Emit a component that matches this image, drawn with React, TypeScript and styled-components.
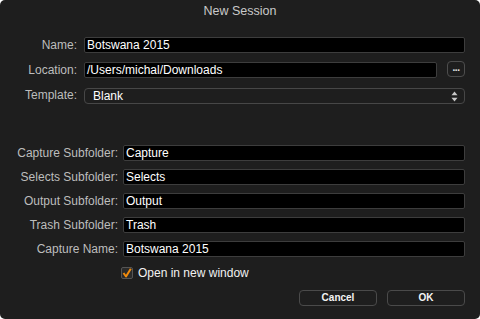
import React from "react";
import styled, { createGlobalStyle } from "styled-components";

const Global = createGlobalStyle`
  html, body { margin: 0; padding: 0; background: #ffffff; }
  body { width: 480px; height: 319px; overflow: hidden; font-family: "Liberation Sans", Arial, sans-serif; }
`;

const Window = styled.div`
  width: 480px;
  height: 319px;
  box-sizing: border-box;
  background: #1e1e1e;
  border-radius: 5px;
  display: flex;
  flex-direction: column;
  overflow: hidden;
`;

const Title = styled.div`
  height: 22px;
  line-height: 22px;
  text-align: center;
  font-size: 12.5px;
  color: #c9c9c9;
`;

const Form = styled.div<{ $label: number; $gap: number; $top: number }>`
  display: grid;
  grid-template-columns: ${(p) => p.$label}px 1fr;
  column-gap: ${(p) => p.$gap}px;
  row-gap: 8px;
  align-items: center;
  margin-top: ${(p) => p.$top}px;
  padding-right: 15px;
`;

const Label = styled.label`
  text-align: right;
  font-size: 12px;
  color: #bdbdbd;
  white-space: nowrap;
`;

const Field = styled.div<{ $mt?: number }>`
  height: 16px;
  box-sizing: border-box;
  background: #000;
  border: 1px solid #3d3d3d;
  border-radius: 2px;
  padding-left: 2px;
  font-size: 12px;
  line-height: 14px;
  color: #ffffff;
  margin-top: ${(p) => p.$mt ?? 0}px;
  white-space: nowrap;
  overflow: hidden;
`;

const FieldWithButton = styled.div`
  display: flex;
  align-items: center;
  gap: 10px;
`;

const Grow = styled(Field)`
  flex: 1;
`;

const DotsButton = styled.div`
  width: 18px;
  height: 16px;
  box-sizing: border-box;
  border: 1px solid #4d4d4d;
  border-radius: 4px;
  margin-top: -1px;
  color: #e8e8e8;
  font-size: 10px;
  font-weight: bold;
  line-height: 12px;
  text-align: center;
  letter-spacing: -0.5px;
`;

const Select = styled.div`
  height: 16px;
  box-sizing: border-box;
  border: 1px solid #474747;
  border-radius: 4px;
  padding: 0 6px 0 8px;
  display: flex;
  align-items: center;
  justify-content: space-between;
  font-size: 12px;
  color: #ffffff;
  margin-top: 2px;
`;

const CheckRow = styled.label`
  display: flex;
  align-items: center;
  gap: 5px;
  margin: 9px 0 0 121px;
  font-size: 12px;
  color: #f2f2f2;
`;

const Box = styled.span`
  width: 12px;
  height: 12px;
  box-sizing: border-box;
  border: 1px solid #555;
  border-radius: 2px;
  background: #2b2b2b;
  display: flex;
  align-items: center;
  justify-content: center;
`;

const Buttons = styled.div`
  display: flex;
  justify-content: flex-end;
  gap: 10px;
  padding-right: 15px;
  margin-top: 10px;
`;

const Button = styled.div`
  width: 78px;
  height: 16px;
  box-sizing: border-box;
  border: 1px solid #4a4a4a;
  border-radius: 4px;
  text-align: center;
  font-size: 10px;
  font-weight: bold;
  line-height: 14px;
  color: #f4f4f4;
`;

const Arrows = () => (
  <svg width="7" height="11" viewBox="0 0 7 11">
    <path d="M3.5 0.5 L6.5 4.3 L0.5 4.3 Z" fill="#c8c8c8" />
    <path d="M3.5 10.5 L6.5 6.7 L0.5 6.7 Z" fill="#c8c8c8" />
  </svg>
);

const Check = () => (
  <svg width="10" height="10" viewBox="0 0 10 10">
    <path d="M1.5 5 L4 8.5 L8.8 0.8" fill="none" stroke="#f28b0c" strokeWidth="2" strokeLinejoin="round" />
  </svg>
);

export default function App() {
  return (
    <>
      <Global />
      <Window>
        <Title>New Session</Title>
        <Form $label={77} $gap={7} $top={15}>
          <Label>Name:</Label>
          <Field>Botswana 2015</Field>
          <Label>Location:</Label>
          <FieldWithButton>
            <Grow $mt={1}>/Users/michal/Downloads</Grow>
            <DotsButton>...</DotsButton>
          </FieldWithButton>
          <Label>Template:</Label>
          <Select>
            <span>Blank</span>
            <Arrows />
          </Select>
        </Form>
        <Form $label={118} $gap={5} $top={41}>
          <Label>Capture Subfolder:</Label>
          <Field>Capture</Field>
          <Label>Selects Subfolder:</Label>
          <Field>Selects</Field>
          <Label>Output Subfolder:</Label>
          <Field>Output</Field>
          <Label>Trash Subfolder:</Label>
          <Field>Trash</Field>
          <Label>Capture Name:</Label>
          <Field>Botswana 2015</Field>
        </Form>
        <CheckRow>
          <Box>
            <Check />
          </Box>
          Open in new window
        </CheckRow>
        <Buttons>
          <Button>Cancel</Button>
          <Button>OK</Button>
        </Buttons>
      </Window>
    </>
  );
}
